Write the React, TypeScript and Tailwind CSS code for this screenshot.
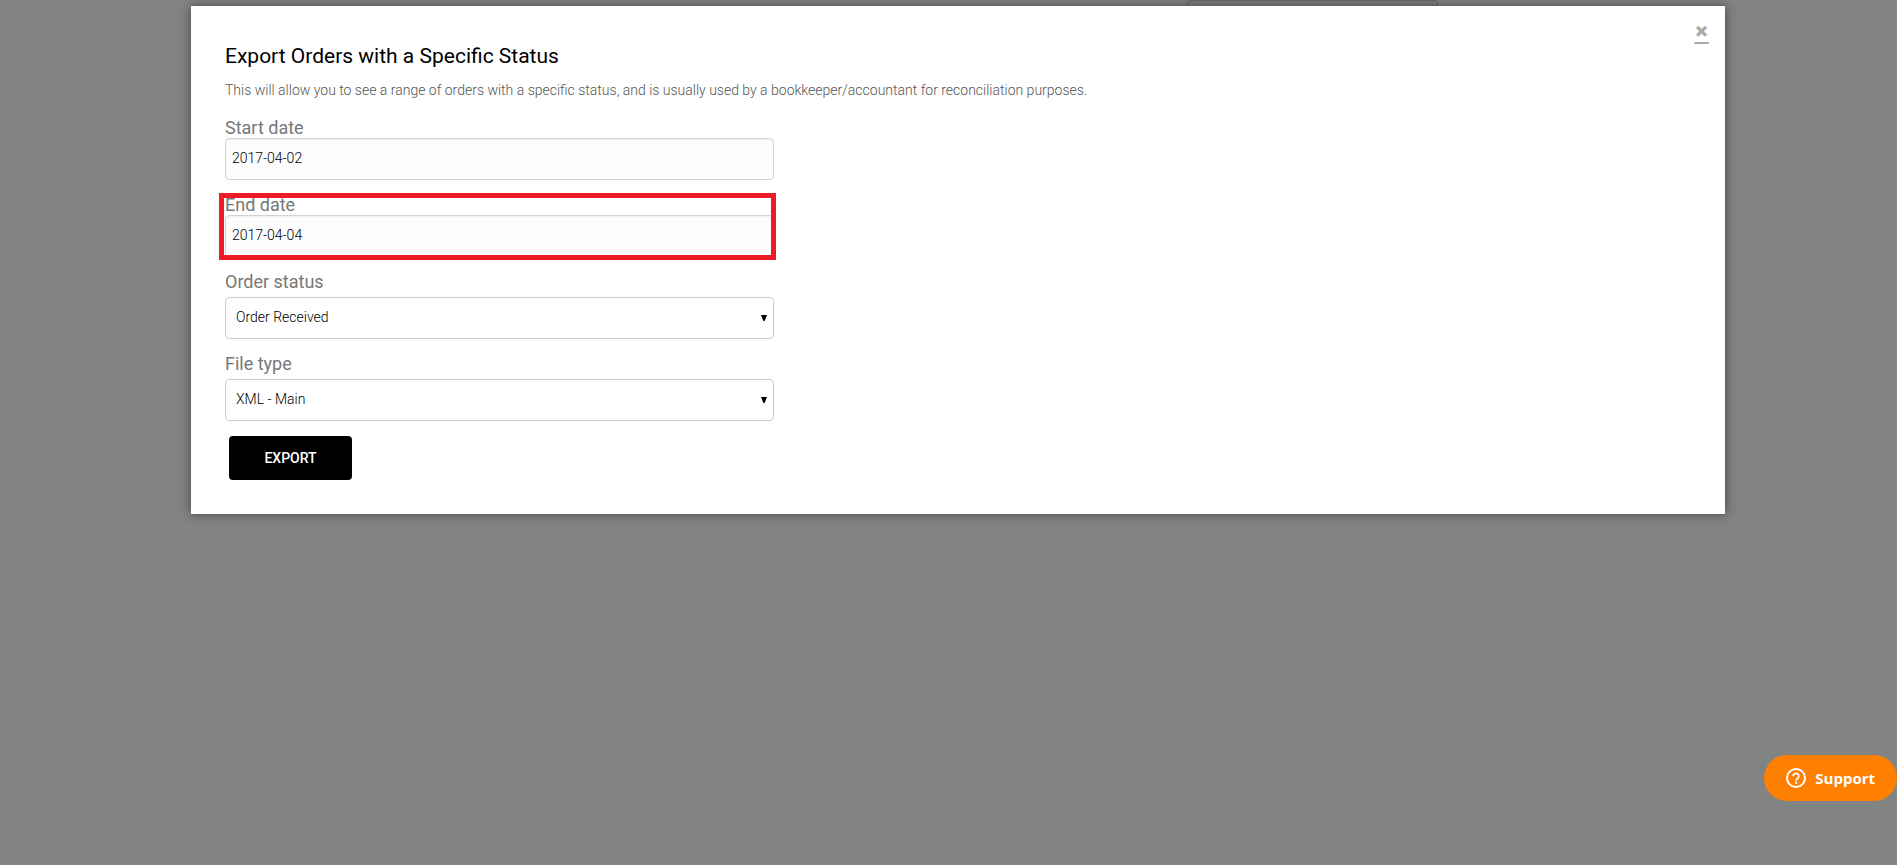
import { useState } from "react";
import type { FormEvent, ReactNode } from "react";

/* =======================
   Data
======================= */

const ORDER_STATUSES = ["Order Received", "Processing", "Shipped", "Cancelled"];
const FILE_TYPES = ["XML - Main", "CSV - Main"];

/* =======================
   Helpers
======================= */

type FieldProps = {
  id: string;
  label: string;
  children: ReactNode;
};

function Field({ id, label, children }: FieldProps) {
  return (
    <div className="flex flex-col">
      <label htmlFor={id} className="text-[18px] leading-5 text-[#777777]">
        {label}
      </label>
      {children}
    </div>
  );
}

type DateInputProps = {
  id: string;
  value: string;
  onChange: (value: string) => void;
};

function DateInput({ id, value, onChange }: DateInputProps) {
  return (
    <input
      id={id}
      name={id}
      type="text"
      value={value}
      onChange={e => onChange(e.target.value)}
      className="h-[42px] w-full rounded border border-[#d3d3d3] bg-[#fdfdfd] pb-2 pl-1.5 pt-1.5 text-sm font-light text-black shadow-[inset_0_1px_2px_rgba(0,0,0,0.06)]"
    />
  );
}

type SelectInputProps = DateInputProps & { options: string[] };

function SelectInput({ id, value, onChange, options }: SelectInputProps) {
  return (
    <div className="relative mt-[5px]">
      <select
        id={id}
        name={id}
        value={value}
        onChange={e => onChange(e.target.value)}
        className="h-[42px] w-full appearance-none rounded border border-[#cccccc] bg-white pb-0.5 pl-2.5 text-sm font-light text-black"
      >
        {options.map(o => (
          <option key={o}>{o}</option>
        ))}
      </select>
      <svg
        viewBox="0 0 6 6"
        className="pointer-events-none absolute right-[7px] top-[18px] h-1.5 w-1.5"
        aria-hidden="true"
      >
        <path d="M0 0h6L3.6 6H2.4z" fill="#000" />
      </svg>
    </div>
  );
}

/* =======================
   Component
======================= */

export default function App() {
  const [startDate, setStartDate] = useState("2017-04-02");
  const [endDate, setEndDate] = useState("2017-04-04");
  const [status, setStatus] = useState(ORDER_STATUSES[0]);
  const [fileType, setFileType] = useState(FILE_TYPES[0]);
  const [open, setOpen] = useState(true);

  const submit = (e: FormEvent) => {
    e.preventDefault();
  };

  return (
    <div className="min-h-screen bg-[#828483] font-[Roboto,sans-serif]">
      {/* Page edge behind the modal */}
      <div className="flex h-1.5 justify-end pr-[459px]">
        <div className="w-[251px] rounded-t border border-b-0 border-[#686868] bg-[#808080]" />
      </div>

      {open && (
        <section
          role="dialog"
          aria-labelledby="export-title"
          className="relative ml-[191px] mr-[172px] bg-white px-[34px] pb-[34px] pt-9 shadow-[0_0_10px_rgba(0,0,0,0.5)]"
        >
          <button
            type="button"
            aria-label="Close"
            onClick={() => setOpen(false)}
            className="absolute right-4 top-2 font-['Open_Sans',sans-serif] text-[25px] font-extrabold leading-8 text-[#aaaaaa] underline"
          >
            ×
          </button>

          <h1 id="export-title" className="text-[21px] leading-7 text-black">
            Export Orders with a Specific Status
          </h1>
          <p className="mt-2.5 text-sm font-light text-[#555555]">
            This will allow you to see a range of orders with a specific status, and is usually used
            by a bookkeeper/accountant for reconciliation purposes.
          </p>

          <form onSubmit={submit} className="mt-[18px] flex w-[549px] max-w-full flex-col gap-[15px]">
            <Field id="start-date" label="Start date">
              <DateInput id="start-date" value={startDate} onChange={setStartDate} />
            </Field>

            <div className="relative">
              <Field id="end-date" label="End date">
                <DateInput id="end-date" value={endDate} onChange={setEndDate} />
              </Field>
              {/* Highlight */}
              <div className="pointer-events-none absolute -bottom-[3px] -left-1.5 -right-0.5 -top-0.5 border-[5px] border-[#ed1c24]" />
            </div>

            <Field id="order-status" label="Order status">
              <SelectInput
                id="order-status"
                value={status}
                onChange={setStatus}
                options={ORDER_STATUSES}
              />
            </Field>

            <Field id="file-type" label="File type">
              <SelectInput
                id="file-type"
                value={fileType}
                onChange={setFileType}
                options={FILE_TYPES}
              />
            </Field>

            <button
              type="submit"
              className="ml-1 h-11 w-[123px] rounded bg-black text-sm font-medium uppercase text-white"
            >
              Export
            </button>
          </form>
        </section>
      )}

      {/* Support launcher */}
      <button
        type="button"
        className="fixed bottom-16 right-0 flex h-[46px] items-center gap-[9px] rounded-full bg-[#ff7f00] px-[22px] font-['Open_Sans',sans-serif] text-[15px] font-bold text-white"
      >
        <svg viewBox="0 0 20 20" className="h-5 w-5" fill="none" aria-hidden="true">
          <circle cx="10" cy="10" r="9" stroke="#fff" strokeWidth="2" />
          <path
            d="M7.2 8.2a2.8 2.8 0 1 1 4.7 2c-1 .8-1.9 1.3-1.9 2.5"
            stroke="#fff"
            strokeWidth="1.8"
          />
          <rect x="9" y="13.8" width="2" height="2" fill="#fff" />
        </svg>
        Support
      </button>
    </div>
  );
}
